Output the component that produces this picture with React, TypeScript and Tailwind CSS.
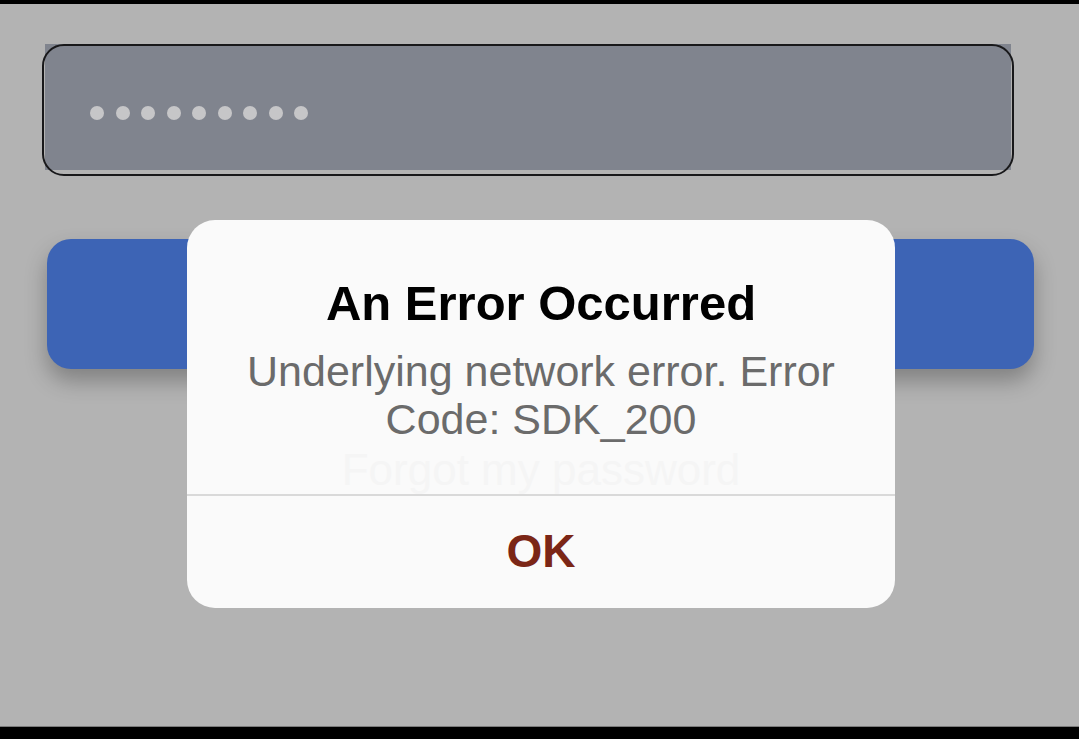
export default function App() {
  const dots = Array.from({ length: 9 })
  return (
    <div className="w-[1079px] h-[739px] flex flex-col bg-black overflow-hidden" style={{ fontFamily: '"Liberation Sans", Arial, sans-serif' }}>
      <div className="h-[4px] bg-black" />
      <div className="relative flex-1 bg-[#b3b3b3] border-b border-[#7a7a7a]">
        {/* dimmed login form behind the dialog */}
        <div className="pt-[43px] pl-[45px] pr-[68px]">
          <div className="h-[126px] bg-[#80848e]">
            <div className="-m-[3px] h-[132px] rounded-[22px] border-2 border-[#18181a] flex items-center gap-[11.5px] pl-[46px] pt-[6px]">
              {dots.map((_, i) => (
                <span key={i} className="w-[14px] h-[14px] rounded-full bg-[#c6c6c8]" />
              ))}
            </div>
          </div>
        </div>
        <div className="mt-[69px] ml-[47px] w-[987px] h-[130px] rounded-[24px] bg-[#3d64b5] shadow-[0_12px_22px_rgba(0,0,0,0.28)]" />

        {/* alert dialog */}
        <div className="absolute left-[187px] top-[216px] w-[708px] h-[388px] rounded-[28px] bg-[#fafafa] flex flex-col">
          <div className="pt-[55px] text-center text-[49px] leading-[56px] font-bold text-black">An Error Occurred</div>
          <div className="mt-[16px] px-[30px] text-center text-[43px] leading-[48px] text-[#6b6b6b]">
            Underlying network error. Error Code: SDK_200
          </div>
          <div className="mt-[3px] text-center text-[44px] leading-[48px] text-[#f5f5f5]">Forgot my password</div>
          <div className="h-[1.5px] bg-[#d9d9d9]" />
          <div className="flex-1 flex items-center justify-center text-[46px] font-bold text-[#7b2616]">OK</div>
        </div>
      </div>
      <div className="h-[12px] bg-black" />
    </div>
  )
}
